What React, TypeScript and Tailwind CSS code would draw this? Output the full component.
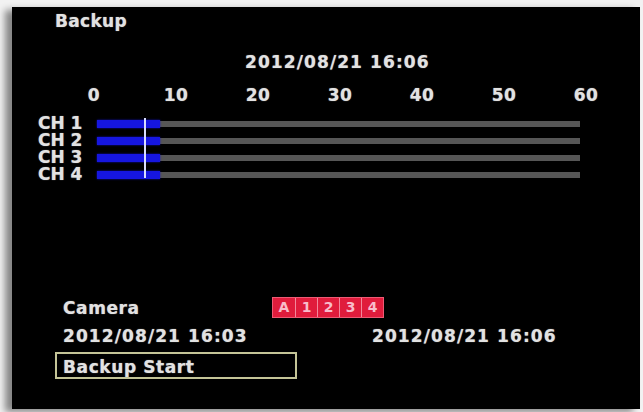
const font = { fontFamily: '"DejaVu Sans", "Liberation Sans", sans-serif' };

const ticks = ["0", "10", "20", "30", "40", "50", "60"];
const channels = ["CH 1", "CH 2", "CH 3", "CH 4"];
const cams = ["A", "1", "2", "3", "4"];

export default function App() {
  return (
    <div
      className="w-[643px] h-[412px] bg-[#f2f2f2] pt-[7px] pl-[12px] pr-[3px] pb-[3px] overflow-hidden"
      style={font}
    >
      <div className="w-[628px] h-[402px] bg-black shadow-[-7px_3px_7px_rgba(0,0,0,0.45)] flex flex-col text-[17px] font-bold text-[#e2e2e2] leading-[20px] [text-shadow:0_0_1px_#9a9a9a]">
        <div className="pt-[4px] pl-[43px] tracking-[0.3px]">Backup</div>

        <div className="mt-[21px] ml-[233px] tracking-[1.1px]">2012/08/21 16:06</div>

        <div className="mt-[13px] ml-[41px] w-[574px] grid grid-cols-7 text-center tracking-[0.5px]">
          {ticks.map((t) => (
            <div key={t}>{t}</div>
          ))}
        </div>

        <div className="mt-[10px] flex">
          <div className="pl-[26px] w-[85px] leading-[17px]">
            {channels.map((c) => (
              <div key={c} className="h-[17px] overflow-visible">
                {c}
              </div>
            ))}
          </div>
          <div className="relative">
            {channels.map((c) => (
              <div key={c} className="h-[17px] flex items-center">
                <div className="relative w-[483px] h-[6px] bg-[#565656]">
                  <div className="absolute left-0 top-[-1px] w-[63px] h-[8px] bg-[#1616e0] shadow-[0_0_2px_#1616e0]" />
                </div>
              </div>
            ))}
            <div className="absolute left-[47px] top-[3px] w-[2px] h-[60px] bg-[#d8dcff]" />
          </div>
        </div>

        <div className="mt-[114px] flex items-center h-[21px]">
          <div className="pl-[51px] w-[260px] tracking-[0.6px]">Camera</div>
          <div className="flex h-[21px] bg-[#e01c3c] border border-[#ee5a74] text-[14px] leading-[19px] text-[#f8bccb] [text-shadow:none]">
            {cams.map((c, i) => (
              <div
                key={c}
                className={
                  i === 0
                    ? "w-[22px] text-center"
                    : "w-[22px] text-center border-l border-[#f2889c]"
                }
              >
                {c}
              </div>
            ))}
          </div>
        </div>

        <div className="mt-[8px] flex tracking-[1.1px]">
          <div className="pl-[51px] w-[360px]">2012/08/21 16:03</div>
          <div>2012/08/21 16:06</div>
        </div>

        <div className="mt-[6px] ml-[43px] w-[242px] h-[27px] border-2 border-[#c4c497] pl-[6px] pt-[3px] tracking-[0.6px]">
          Backup Start
        </div>
      </div>
    </div>
  );
}
